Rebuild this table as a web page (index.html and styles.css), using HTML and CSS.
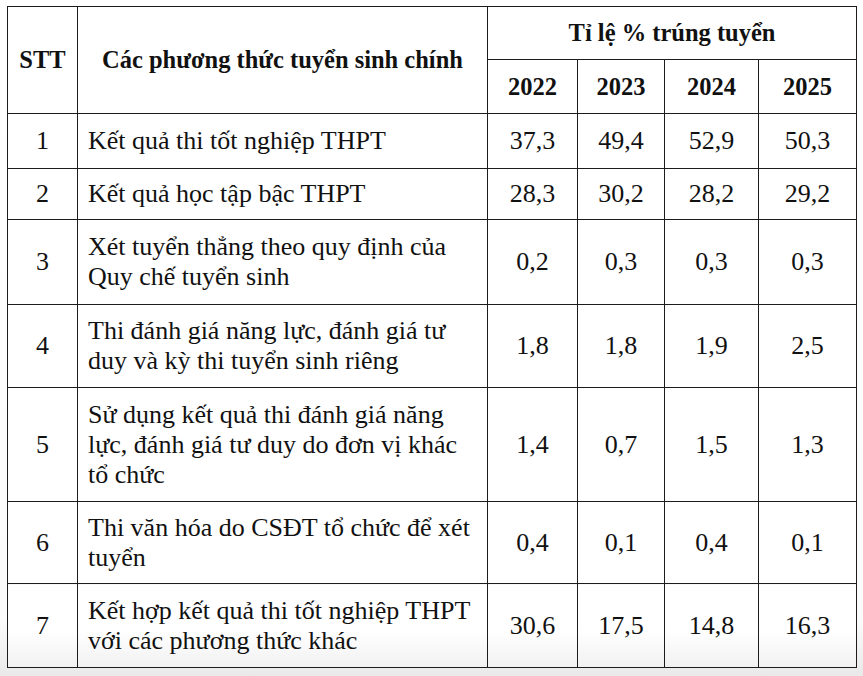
FILE: index.html
```html
<!DOCTYPE html>
<html lang="vi">
<head>
<meta charset="utf-8">
<title>Tỉ lệ trúng tuyển</title>
<link rel="stylesheet" href="styles.css">
</head>
<body>
<div class="page">
<table class="tbl">
<colgroup>
<col class="c-stt"><col class="c-name"><col class="c-y1"><col class="c-y2"><col class="c-y3"><col class="c-y4">
</colgroup>
<thead>
<tr class="h1">
<th rowspan="2">STT</th>
<th rowspan="2">Các phương thức tuyển sinh chính</th>
<th colspan="4">Tỉ lệ % trúng tuyển</th>
</tr>
<tr class="h2">
<th>2022</th><th>2023</th><th>2024</th><th>2025</th>
</tr>
</thead>
<tbody>
<tr class="r1"><td>1</td><td class="name">Kết quả thi tốt nghiệp THPT</td><td>37,3</td><td>49,4</td><td>52,9</td><td>50,3</td></tr>
<tr class="r2"><td>2</td><td class="name">Kết quả học tập bậc THPT</td><td>28,3</td><td>30,2</td><td>28,2</td><td>29,2</td></tr>
<tr class="r3"><td>3</td><td class="name">Xét tuyển thẳng theo quy định của<br>Quy chế tuyển sinh</td><td>0,2</td><td>0,3</td><td>0,3</td><td>0,3</td></tr>
<tr class="r4"><td>4</td><td class="name">Thi đánh giá năng lực, đánh giá tư<br>duy và kỳ thi tuyển sinh riêng</td><td>1,8</td><td>1,8</td><td>1,9</td><td>2,5</td></tr>
<tr class="r5"><td>5</td><td class="name">Sử dụng kết quả thi đánh giá năng<br>lực, đánh giá tư duy do đơn vị khác<br>tổ chức</td><td>1,4</td><td>0,7</td><td>1,5</td><td>1,3</td></tr>
<tr class="r6"><td>6</td><td class="name">Thi văn hóa do CSĐT tổ chức để xét<br>tuyển</td><td>0,4</td><td>0,1</td><td>0,4</td><td>0,1</td></tr>
<tr class="r7"><td>7</td><td class="name">Kết hợp kết quả thi tốt nghiệp THPT<br>với các phương thức khác</td><td>30,6</td><td>17,5</td><td>14,8</td><td>16,3</td></tr>
</tbody>
</table>
</div>
</body>
</html>
```
FILE: styles.css
```css
html, body {
  margin: 0;
  padding: 0;
}
body {
  width: 863px;
  height: 676px;
  overflow: hidden;
  background: linear-gradient(to bottom, #ffffff 0, #fbfbfb 620px, #e9e9e9 676px);
  font-family: "Liberation Serif", "Times New Roman", "DejaVu Serif", serif;
  color: #111;
}
.page {
  padding: 6px 0 0 7px;
}
.tbl {
  border-collapse: collapse;
  table-layout: fixed;
  width: 849px;
  background: #fff;
}
.c-stt { width: 70px; }
.c-name { width: 410px; }
.c-y1 { width: 90px; }
.c-y2 { width: 87px; }
.c-y3 { width: 94px; }
.c-y4 { width: 98px; }
.tbl th, .tbl td {
  border: 1px solid #1c1c1c;
  padding: 0;
  text-align: center;
  vertical-align: middle;
  font-size: 26px;
  line-height: 30px;
}
.tbl th {
  font-weight: bold;
  font-size: 24.5px;
}
.tbl td.name {
  text-align: left;
  padding-left: 10px;
}
.h1 { height: 53px; }
.h2 { height: 54px; }
.r1 { height: 55px; }
.r2 { height: 51px; }
.r3 { height: 85px; }
.r4 { height: 83px; }
.r5 { height: 114px; }
.r6 { height: 82px; }
.r7 { height: 84px; }
.r7 td {
  background: linear-gradient(to bottom, #ffffff 0, #ffffff 55%, #f1f1f1 100%);
}
```
